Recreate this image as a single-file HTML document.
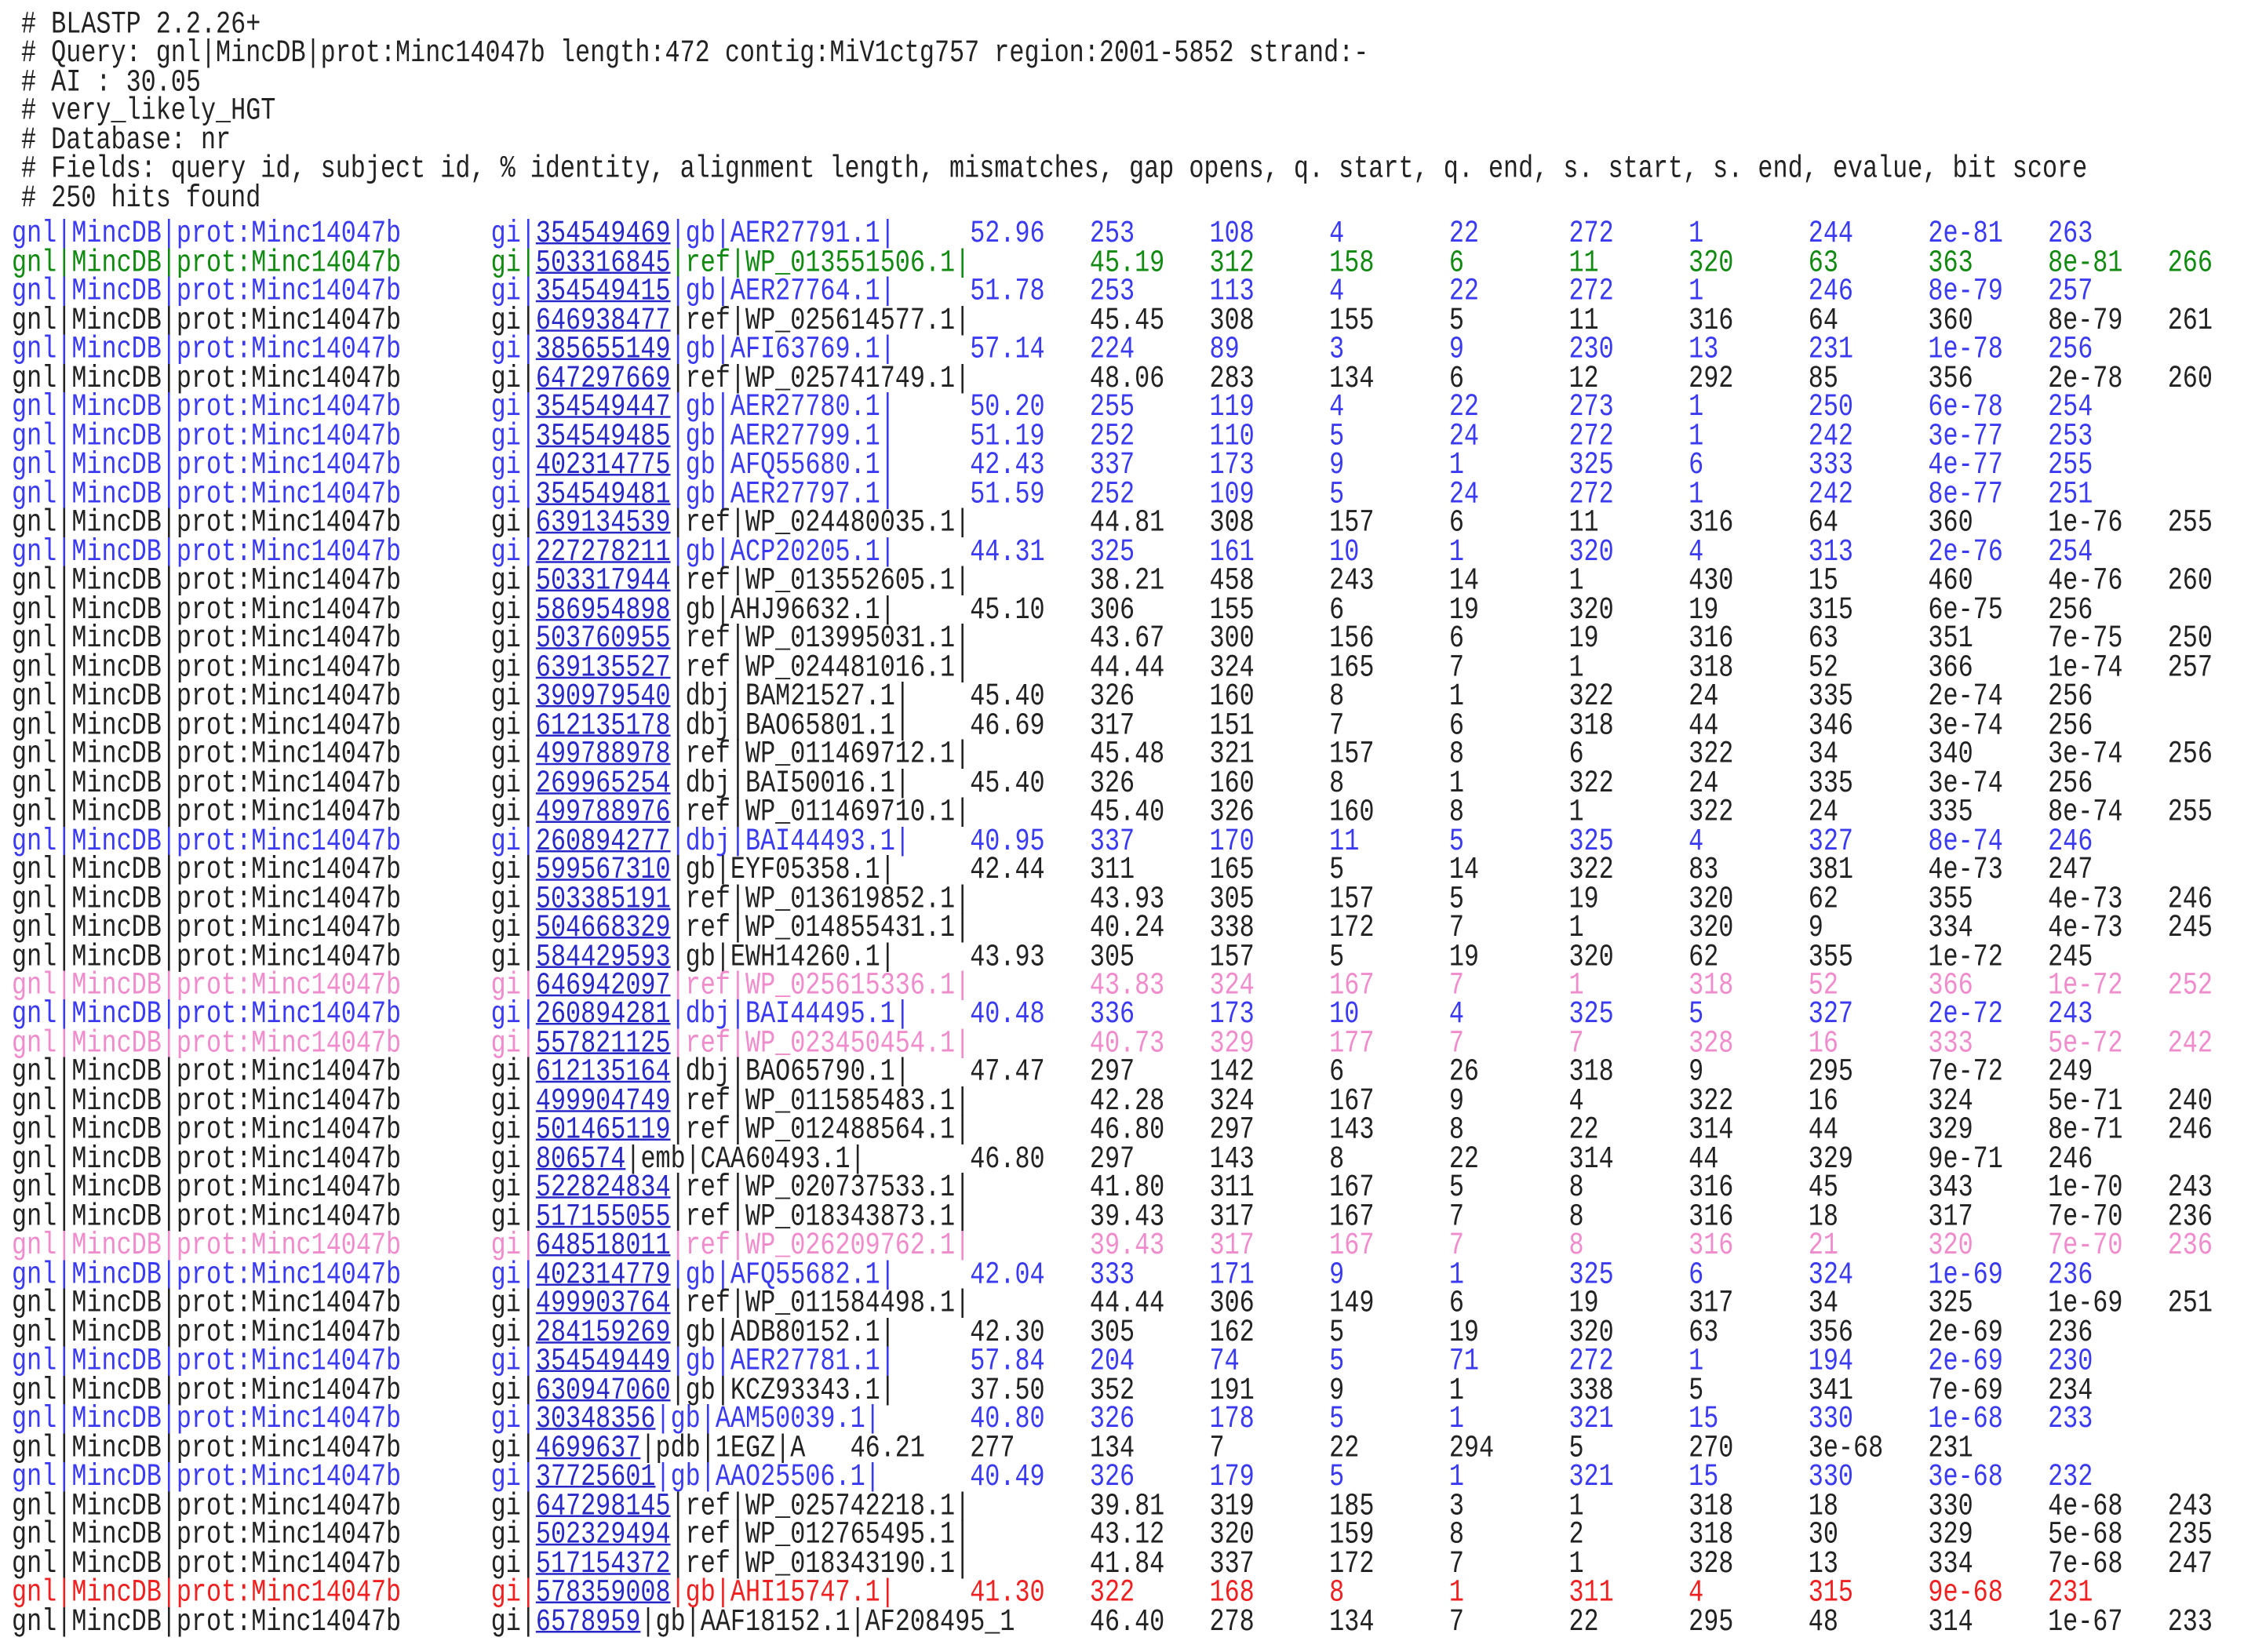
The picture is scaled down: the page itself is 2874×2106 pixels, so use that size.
<!DOCTYPE html>
<html><head><meta charset="utf-8"><style>
html,body{margin:0;padding:0;background:#fff;width:2874px;height:2106px;overflow:hidden}
pre{margin:0;position:absolute;left:15px;top:13.5px;font-family:"Liberation Mono",monospace;font-size:31.8px;line-height:29.48px;tab-size:8;-moz-tab-size:8;transform:scaleY(1.25);transform-origin:0 0;color:#222}
.h{padding-left:12px;display:block}
.sp{display:block;height:7px}
.b{color:#3a3af2}.g{color:#108a10}.p{color:#f08ccc}.r{color:#f02020}.k{color:#222}
u{color:#2828c8;text-decoration:underline;text-decoration-thickness:2px}
</style></head><body><pre><span class="h"># BLASTP 2.2.26+
# Query: gnl|MincDB|prot:Minc14047b length:472 contig:MiV1ctg757 region:2001-5852 strand:-
# AI : 30.05
# very_likely_HGT
# Database: nr
# Fields: query id, subject id, % identity, alignment length, mismatches, gap opens, q. start, q. end, s. start, s. end, evalue, bit score
# 250 hits found</span><span class="sp"></span><span class="b">gnl|MincDB|prot:Minc14047b&#9;gi|<u>354549469</u>|gb|AER27791.1|&#9;52.96&#9;253&#9;108&#9;4&#9;22&#9;272&#9;1&#9;244&#9;2e-81&#9;263</span>
<span class="g">gnl|MincDB|prot:Minc14047b&#9;gi|<u>503316845</u>|ref|WP_013551506.1|&#9;45.19&#9;312&#9;158&#9;6&#9;11&#9;320&#9;63&#9;363&#9;8e-81&#9;266</span>
<span class="b">gnl|MincDB|prot:Minc14047b&#9;gi|<u>354549415</u>|gb|AER27764.1|&#9;51.78&#9;253&#9;113&#9;4&#9;22&#9;272&#9;1&#9;246&#9;8e-79&#9;257</span>
<span class="k">gnl|MincDB|prot:Minc14047b&#9;gi|<u>646938477</u>|ref|WP_025614577.1|&#9;45.45&#9;308&#9;155&#9;5&#9;11&#9;316&#9;64&#9;360&#9;8e-79&#9;261</span>
<span class="b">gnl|MincDB|prot:Minc14047b&#9;gi|<u>385655149</u>|gb|AFI63769.1|&#9;57.14&#9;224&#9;89&#9;3&#9;9&#9;230&#9;13&#9;231&#9;1e-78&#9;256</span>
<span class="k">gnl|MincDB|prot:Minc14047b&#9;gi|<u>647297669</u>|ref|WP_025741749.1|&#9;48.06&#9;283&#9;134&#9;6&#9;12&#9;292&#9;85&#9;356&#9;2e-78&#9;260</span>
<span class="b">gnl|MincDB|prot:Minc14047b&#9;gi|<u>354549447</u>|gb|AER27780.1|&#9;50.20&#9;255&#9;119&#9;4&#9;22&#9;273&#9;1&#9;250&#9;6e-78&#9;254</span>
<span class="b">gnl|MincDB|prot:Minc14047b&#9;gi|<u>354549485</u>|gb|AER27799.1|&#9;51.19&#9;252&#9;110&#9;5&#9;24&#9;272&#9;1&#9;242&#9;3e-77&#9;253</span>
<span class="b">gnl|MincDB|prot:Minc14047b&#9;gi|<u>402314775</u>|gb|AFQ55680.1|&#9;42.43&#9;337&#9;173&#9;9&#9;1&#9;325&#9;6&#9;333&#9;4e-77&#9;255</span>
<span class="b">gnl|MincDB|prot:Minc14047b&#9;gi|<u>354549481</u>|gb|AER27797.1|&#9;51.59&#9;252&#9;109&#9;5&#9;24&#9;272&#9;1&#9;242&#9;8e-77&#9;251</span>
<span class="k">gnl|MincDB|prot:Minc14047b&#9;gi|<u>639134539</u>|ref|WP_024480035.1|&#9;44.81&#9;308&#9;157&#9;6&#9;11&#9;316&#9;64&#9;360&#9;1e-76&#9;255</span>
<span class="b">gnl|MincDB|prot:Minc14047b&#9;gi|<u>227278211</u>|gb|ACP20205.1|&#9;44.31&#9;325&#9;161&#9;10&#9;1&#9;320&#9;4&#9;313&#9;2e-76&#9;254</span>
<span class="k">gnl|MincDB|prot:Minc14047b&#9;gi|<u>503317944</u>|ref|WP_013552605.1|&#9;38.21&#9;458&#9;243&#9;14&#9;1&#9;430&#9;15&#9;460&#9;4e-76&#9;260</span>
<span class="k">gnl|MincDB|prot:Minc14047b&#9;gi|<u>586954898</u>|gb|AHJ96632.1|&#9;45.10&#9;306&#9;155&#9;6&#9;19&#9;320&#9;19&#9;315&#9;6e-75&#9;256</span>
<span class="k">gnl|MincDB|prot:Minc14047b&#9;gi|<u>503760955</u>|ref|WP_013995031.1|&#9;43.67&#9;300&#9;156&#9;6&#9;19&#9;316&#9;63&#9;351&#9;7e-75&#9;250</span>
<span class="k">gnl|MincDB|prot:Minc14047b&#9;gi|<u>639135527</u>|ref|WP_024481016.1|&#9;44.44&#9;324&#9;165&#9;7&#9;1&#9;318&#9;52&#9;366&#9;1e-74&#9;257</span>
<span class="k">gnl|MincDB|prot:Minc14047b&#9;gi|<u>390979540</u>|dbj|BAM21527.1|&#9;45.40&#9;326&#9;160&#9;8&#9;1&#9;322&#9;24&#9;335&#9;2e-74&#9;256</span>
<span class="k">gnl|MincDB|prot:Minc14047b&#9;gi|<u>612135178</u>|dbj|BAO65801.1|&#9;46.69&#9;317&#9;151&#9;7&#9;6&#9;318&#9;44&#9;346&#9;3e-74&#9;256</span>
<span class="k">gnl|MincDB|prot:Minc14047b&#9;gi|<u>499788978</u>|ref|WP_011469712.1|&#9;45.48&#9;321&#9;157&#9;8&#9;6&#9;322&#9;34&#9;340&#9;3e-74&#9;256</span>
<span class="k">gnl|MincDB|prot:Minc14047b&#9;gi|<u>269965254</u>|dbj|BAI50016.1|&#9;45.40&#9;326&#9;160&#9;8&#9;1&#9;322&#9;24&#9;335&#9;3e-74&#9;256</span>
<span class="k">gnl|MincDB|prot:Minc14047b&#9;gi|<u>499788976</u>|ref|WP_011469710.1|&#9;45.40&#9;326&#9;160&#9;8&#9;1&#9;322&#9;24&#9;335&#9;8e-74&#9;255</span>
<span class="b">gnl|MincDB|prot:Minc14047b&#9;gi|<u>260894277</u>|dbj|BAI44493.1|&#9;40.95&#9;337&#9;170&#9;11&#9;5&#9;325&#9;4&#9;327&#9;8e-74&#9;246</span>
<span class="k">gnl|MincDB|prot:Minc14047b&#9;gi|<u>599567310</u>|gb|EYF05358.1|&#9;42.44&#9;311&#9;165&#9;5&#9;14&#9;322&#9;83&#9;381&#9;4e-73&#9;247</span>
<span class="k">gnl|MincDB|prot:Minc14047b&#9;gi|<u>503385191</u>|ref|WP_013619852.1|&#9;43.93&#9;305&#9;157&#9;5&#9;19&#9;320&#9;62&#9;355&#9;4e-73&#9;246</span>
<span class="k">gnl|MincDB|prot:Minc14047b&#9;gi|<u>504668329</u>|ref|WP_014855431.1|&#9;40.24&#9;338&#9;172&#9;7&#9;1&#9;320&#9;9&#9;334&#9;4e-73&#9;245</span>
<span class="k">gnl|MincDB|prot:Minc14047b&#9;gi|<u>584429593</u>|gb|EWH14260.1|&#9;43.93&#9;305&#9;157&#9;5&#9;19&#9;320&#9;62&#9;355&#9;1e-72&#9;245</span>
<span class="p">gnl|MincDB|prot:Minc14047b&#9;gi|<u>646942097</u>|ref|WP_025615336.1|&#9;43.83&#9;324&#9;167&#9;7&#9;1&#9;318&#9;52&#9;366&#9;1e-72&#9;252</span>
<span class="b">gnl|MincDB|prot:Minc14047b&#9;gi|<u>260894281</u>|dbj|BAI44495.1|&#9;40.48&#9;336&#9;173&#9;10&#9;4&#9;325&#9;5&#9;327&#9;2e-72&#9;243</span>
<span class="p">gnl|MincDB|prot:Minc14047b&#9;gi|<u>557821125</u>|ref|WP_023450454.1|&#9;40.73&#9;329&#9;177&#9;7&#9;7&#9;328&#9;16&#9;333&#9;5e-72&#9;242</span>
<span class="k">gnl|MincDB|prot:Minc14047b&#9;gi|<u>612135164</u>|dbj|BAO65790.1|&#9;47.47&#9;297&#9;142&#9;6&#9;26&#9;318&#9;9&#9;295&#9;7e-72&#9;249</span>
<span class="k">gnl|MincDB|prot:Minc14047b&#9;gi|<u>499904749</u>|ref|WP_011585483.1|&#9;42.28&#9;324&#9;167&#9;9&#9;4&#9;322&#9;16&#9;324&#9;5e-71&#9;240</span>
<span class="k">gnl|MincDB|prot:Minc14047b&#9;gi|<u>501465119</u>|ref|WP_012488564.1|&#9;46.80&#9;297&#9;143&#9;8&#9;22&#9;314&#9;44&#9;329&#9;8e-71&#9;246</span>
<span class="k">gnl|MincDB|prot:Minc14047b&#9;gi|<u>806574</u>|emb|CAA60493.1|&#9;46.80&#9;297&#9;143&#9;8&#9;22&#9;314&#9;44&#9;329&#9;9e-71&#9;246</span>
<span class="k">gnl|MincDB|prot:Minc14047b&#9;gi|<u>522824834</u>|ref|WP_020737533.1|&#9;41.80&#9;311&#9;167&#9;5&#9;8&#9;316&#9;45&#9;343&#9;1e-70&#9;243</span>
<span class="k">gnl|MincDB|prot:Minc14047b&#9;gi|<u>517155055</u>|ref|WP_018343873.1|&#9;39.43&#9;317&#9;167&#9;7&#9;8&#9;316&#9;18&#9;317&#9;7e-70&#9;236</span>
<span class="p">gnl|MincDB|prot:Minc14047b&#9;gi|<u>648518011</u>|ref|WP_026209762.1|&#9;39.43&#9;317&#9;167&#9;7&#9;8&#9;316&#9;21&#9;320&#9;7e-70&#9;236</span>
<span class="b">gnl|MincDB|prot:Minc14047b&#9;gi|<u>402314779</u>|gb|AFQ55682.1|&#9;42.04&#9;333&#9;171&#9;9&#9;1&#9;325&#9;6&#9;324&#9;1e-69&#9;236</span>
<span class="k">gnl|MincDB|prot:Minc14047b&#9;gi|<u>499903764</u>|ref|WP_011584498.1|&#9;44.44&#9;306&#9;149&#9;6&#9;19&#9;317&#9;34&#9;325&#9;1e-69&#9;251</span>
<span class="k">gnl|MincDB|prot:Minc14047b&#9;gi|<u>284159269</u>|gb|ADB80152.1|&#9;42.30&#9;305&#9;162&#9;5&#9;19&#9;320&#9;63&#9;356&#9;2e-69&#9;236</span>
<span class="b">gnl|MincDB|prot:Minc14047b&#9;gi|<u>354549449</u>|gb|AER27781.1|&#9;57.84&#9;204&#9;74&#9;5&#9;71&#9;272&#9;1&#9;194&#9;2e-69&#9;230</span>
<span class="k">gnl|MincDB|prot:Minc14047b&#9;gi|<u>630947060</u>|gb|KCZ93343.1|&#9;37.50&#9;352&#9;191&#9;9&#9;1&#9;338&#9;5&#9;341&#9;7e-69&#9;234</span>
<span class="b">gnl|MincDB|prot:Minc14047b&#9;gi|<u>30348356</u>|gb|AAM50039.1|&#9;40.80&#9;326&#9;178&#9;5&#9;1&#9;321&#9;15&#9;330&#9;1e-68&#9;233</span>
<span class="k">gnl|MincDB|prot:Minc14047b&#9;gi|<u>4699637</u>|pdb|1EGZ|A&#9;46.21&#9;277&#9;134&#9;7&#9;22&#9;294&#9;5&#9;270&#9;3e-68&#9;231</span>
<span class="b">gnl|MincDB|prot:Minc14047b&#9;gi|<u>37725601</u>|gb|AAO25506.1|&#9;40.49&#9;326&#9;179&#9;5&#9;1&#9;321&#9;15&#9;330&#9;3e-68&#9;232</span>
<span class="k">gnl|MincDB|prot:Minc14047b&#9;gi|<u>647298145</u>|ref|WP_025742218.1|&#9;39.81&#9;319&#9;185&#9;3&#9;1&#9;318&#9;18&#9;330&#9;4e-68&#9;243</span>
<span class="k">gnl|MincDB|prot:Minc14047b&#9;gi|<u>502329494</u>|ref|WP_012765495.1|&#9;43.12&#9;320&#9;159&#9;8&#9;2&#9;318&#9;30&#9;329&#9;5e-68&#9;235</span>
<span class="k">gnl|MincDB|prot:Minc14047b&#9;gi|<u>517154372</u>|ref|WP_018343190.1|&#9;41.84&#9;337&#9;172&#9;7&#9;1&#9;328&#9;13&#9;334&#9;7e-68&#9;247</span>
<span class="r">gnl|MincDB|prot:Minc14047b&#9;gi|<u>578359008</u>|gb|AHI15747.1|&#9;41.30&#9;322&#9;168&#9;8&#9;1&#9;311&#9;4&#9;315&#9;9e-68&#9;231</span>
<span class="k">gnl|MincDB|prot:Minc14047b&#9;gi|<u>6578959</u>|gb|AAF18152.1|AF208495_1&#9;46.40&#9;278&#9;134&#9;7&#9;22&#9;295&#9;48&#9;314&#9;1e-67&#9;233</span></pre></body></html>
